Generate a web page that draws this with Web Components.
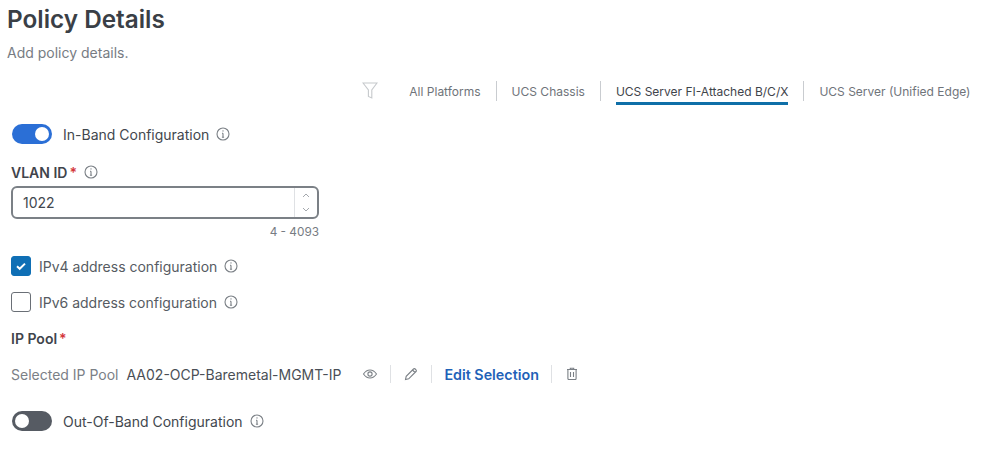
<!DOCTYPE html>
<html>
<head>
<meta charset="utf-8">
<title>Policy Details</title>
<style>
html,body{margin:0;padding:0;background:#fff;overflow:hidden}
body{font-family:Inter,"Noto Sans",sans-serif;color:#3f444b}
</style>
</head>
<body>
<policy-details></policy-details>
<script>
class InfoIcon extends HTMLElement{
    connectedCallback(){
        this.attachShadow({mode:'open'})
        this.shadowRoot.innerHTML=`
        <style>
            :host{display:inline-flex;width:14px;height:14px}
            svg{width:14px;height:14px;display:block}
        </style>
        <svg viewBox="0 0 14 14" fill="none" stroke="#7b8086" stroke-width="1.1">
            <circle cx="7" cy="7" r="6"/>
            <path d="M7 6.200v4M5.900 10.200h2.200M6 6.200h1"/>
            <circle cx="7" cy="3.900" r=".7" fill="#7b8086" stroke="none"/>
        </svg>`
    }
}
customElements.define('info-icon',InfoIcon)

class ToggleSwitch extends HTMLElement{
    connectedCallback(){
        this.attachShadow({mode:'open'})
        this.shadowRoot.innerHTML=`
        <style>
            :host{display:flex;align-items:center;gap:11px;font-size:14px;color:#42474e;height:20px;padding-left:12px}
            .track{width:40px;height:20px;border-radius:10px;background:#565b63;position:relative;flex:none}
            :host([on]) .track{background:#2b6fd6}
            .knob{position:absolute;top:3px;left:3px;width:14px;height:14px;border-radius:50%;background:#fff}
            :host([on]) .knob{left:23px}
            .row{display:flex;align-items:center;gap:7px}
        </style>
        <span class="track"><span class="knob"></span></span>
        <span class="row"><slot></slot><info-icon></info-icon></span>`
    }
}
customElements.define('toggle-switch',ToggleSwitch)

class CheckRow extends HTMLElement{
    connectedCallback(){
        this.attachShadow({mode:'open'})
        this.shadowRoot.innerHTML=`
        <style>
            :host{display:flex;align-items:center;gap:8px;font-size:14px;color:#565b62;height:20px;padding-left:11px}
            .box{width:20px;height:20px;box-sizing:border-box;border:1.5px solid #6a6f76;border-radius:3px;flex:none;display:flex;align-items:center;justify-content:center}
            :host([checked]) .box{background:#0f6fb5;border-color:#0f6fb5}
            svg{display:none;width:12px;height:12px}
            :host([checked]) svg{display:block}
            .row{display:flex;align-items:center;gap:7px}
        </style>
        <span class="box"><svg viewBox="0 0 12 12" fill="none" stroke="#fff" stroke-width="2"><path d="M2 6.300l2.700 2.500L10 3.600"/></svg></span>
        <span class="row"><slot></slot><info-icon></info-icon></span>`
    }
}
customElements.define('check-row',CheckRow)

class FieldLabel extends HTMLElement{
    connectedCallback(){
        this.attachShadow({mode:'open'})
        this.shadowRoot.innerHTML=`
        <style>
            :host{display:flex;align-items:center;font-size:14px;font-weight:600;color:#3f444b;height:18px;padding-left:11px}
            b{color:#d3363a;font-weight:600;margin-left:2px;margin-right:7px}
        </style>
        <slot></slot><b>*</b><slot name="info"></slot>`
    }
}
customElements.define('field-label',FieldLabel)

class NumberField extends HTMLElement{
    connectedCallback(){
        this.attachShadow({mode:'open'})
        this.shadowRoot.innerHTML=`
        <style>
            :host{display:block;width:308px;margin-left:11px}
            .input{height:33px;box-sizing:border-box;border:2px solid #7b8086;border-radius:6px;display:flex;font-size:14px;color:#42474e}
            .val{flex:1;display:flex;align-items:center;padding-left:10px}
            .spin{width:22px;border-left:1px solid #dfe1e4;display:flex;flex-direction:column}
            .spin span{flex:1;display:flex;align-items:center;justify-content:center}
            svg{width:8px;height:5px}
            .hint{font-size:11.800px;line-height:14px;color:#777c83;text-align:right;margin-top:6px}
        </style>
        <div class="input">
            <div class="val"><slot></slot></div>
            <div class="spin">
                <span><svg viewBox="0 0 8 5" fill="none" stroke="#a4a8ad"><path d="M1 4l3-3 3 3"/></svg></span>
                <span><svg viewBox="0 0 8 5" fill="none" stroke="#a4a8ad"><path d="M1 1l3 3 3-3"/></svg></span>
            </div>
        </div>
        <div class="hint">4 - 4093</div>`
    }
}
customElements.define('number-field',NumberField)

class PlatformTabs extends HTMLElement{
    connectedCallback(){
        this.attachShadow({mode:'open'})
        this.shadowRoot.innerHTML=`
        <style>
            :host{display:flex;justify-content:flex-end;align-items:center;font-size:12px;color:#6f747a;height:26px;padding-right:10.500px}
            svg{width:16px;height:17px;margin-right:31px;margin-bottom:2px}
            .tab{height:22px;display:flex;align-items:center;position:relative}
            .sep{width:1px;height:20px;background:#c9ccd0;margin:0 15px}
            .active{color:#3f444b}
            .active::after{content:"";position:absolute;left:0;right:0;bottom:-3px;height:3px;background:#0f6fa8}
        </style>
        <svg viewBox="0 0 16 17" fill="none" stroke="#c6c9cc" stroke-width="1.100"><path d="M1 1h14L9.800 8v8l-3.400-1.600V8z"/></svg>
        <span class="tab">All Platforms</span><span class="sep"></span>
        <span class="tab">UCS Chassis</span><span class="sep"></span>
        <span class="tab active">UCS Server FI-Attached B/C/X</span><span class="sep"></span>
        <span class="tab">UCS Server (Unified Edge)</span>`
    }
}
customElements.define('platform-tabs',PlatformTabs)

class PoolSelection extends HTMLElement{
    connectedCallback(){
        this.attachShadow({mode:'open'})
        this.shadowRoot.innerHTML=`
        <style>
            :host{display:flex;align-items:center;height:24px;padding-left:11px;font-size:14px;color:#4a4f56}
            .lbl{color:#7b8086;margin-right:8px}
            svg{width:16px;height:16px;display:block;flex:none}
            .sep{width:1px;height:18px;background:#dfe1e4;margin:0 12px}
            a{color:#1f62b8;font-weight:600;font-size:14.300px;text-decoration:none}
        </style>
        <span class="lbl">Selected IP Pool</span>
        <span style="margin-right:21px">AA02-OCP-Baremetal-MGMT-IP</span>
        <svg viewBox="0 0 16 16" fill="none" stroke="#7b8086" stroke-width="1.100"><path d="M1.500 8C3.300 5.300 5.400 4 8 4s4.700 1.300 6.500 4c-1.800 2.700-3.900 4-6.500 4S3.300 10.700 1.500 8z"/><circle cx="8" cy="8" r="2.100"/></svg>
        <span class="sep"></span>
        <svg viewBox="0 0 16 16" fill="none" stroke="#7b8086" stroke-width="1.100"><path d="M2.500 13.500l.7-3.200 7.300-7.300a1.200 1.200 0 0 1 1.700 0l.8.8a1.200 1.200 0 0 1 0 1.700l-7.300 7.300zM9.500 4l2.500 2.500"/></svg>
        <span class="sep"></span>
        <a>Edit Selection</a>
        <span class="sep"></span>
        <svg viewBox="0 0 16 16" fill="none" stroke="#7b8086" stroke-width="1.100"><path d="M3 3.500h10M6.300 3.500V2.200h3.400v1.300M3.900 3.500v9.100a.9.900 0 0 0 .9.900h6.400a.9.900 0 0 0 .9-.9V3.500M6.500 6v5M9.500 6v5"/></svg>`
    }
}
customElements.define('pool-selection',PoolSelection)

class PolicyDetails extends HTMLElement{
    connectedCallback(){
        this.attachShadow({mode:'open'})
        this.shadowRoot.innerHTML=`
        <style>
            :host{display:flex;flex-direction:column;width:981px;height:457px;box-sizing:border-box}
            h1{margin:4px 0 0 7px;font-size:24.300px;line-height:30px;font-weight:600;color:#3a3f46}
            p{margin:10px 0 0 7px;font-size:14px;line-height:18px;color:#777c83}
            platform-tabs{margin-top:16px}
            .in-band{margin-top:20px}
            .vlan{margin-top:19px}
            number-field{margin-top:5px}
            .v4{margin-top:17px}
            .v6{margin-top:16px}
            .pool{margin-top:17px}
            pool-selection{margin-top:15px}
            .oob{margin-top:25px}
        </style>
        <h1>Policy Details</h1>
        <p>Add policy details.</p>
        <platform-tabs></platform-tabs>
        <toggle-switch class="in-band" on>In-Band Configuration</toggle-switch>
        <field-label class="vlan">VLAN ID<info-icon slot="info"></info-icon></field-label>
        <number-field>1022</number-field>
        <check-row class="v4" checked>IPv4 address configuration</check-row>
        <check-row class="v6">IPv6 address configuration</check-row>
        <field-label class="pool">IP Pool</field-label>
        <pool-selection></pool-selection>
        <toggle-switch class="oob">Out-Of-Band Configuration</toggle-switch>`
    }
}
customElements.define('policy-details',PolicyDetails)
</script>
</body>
</html>
